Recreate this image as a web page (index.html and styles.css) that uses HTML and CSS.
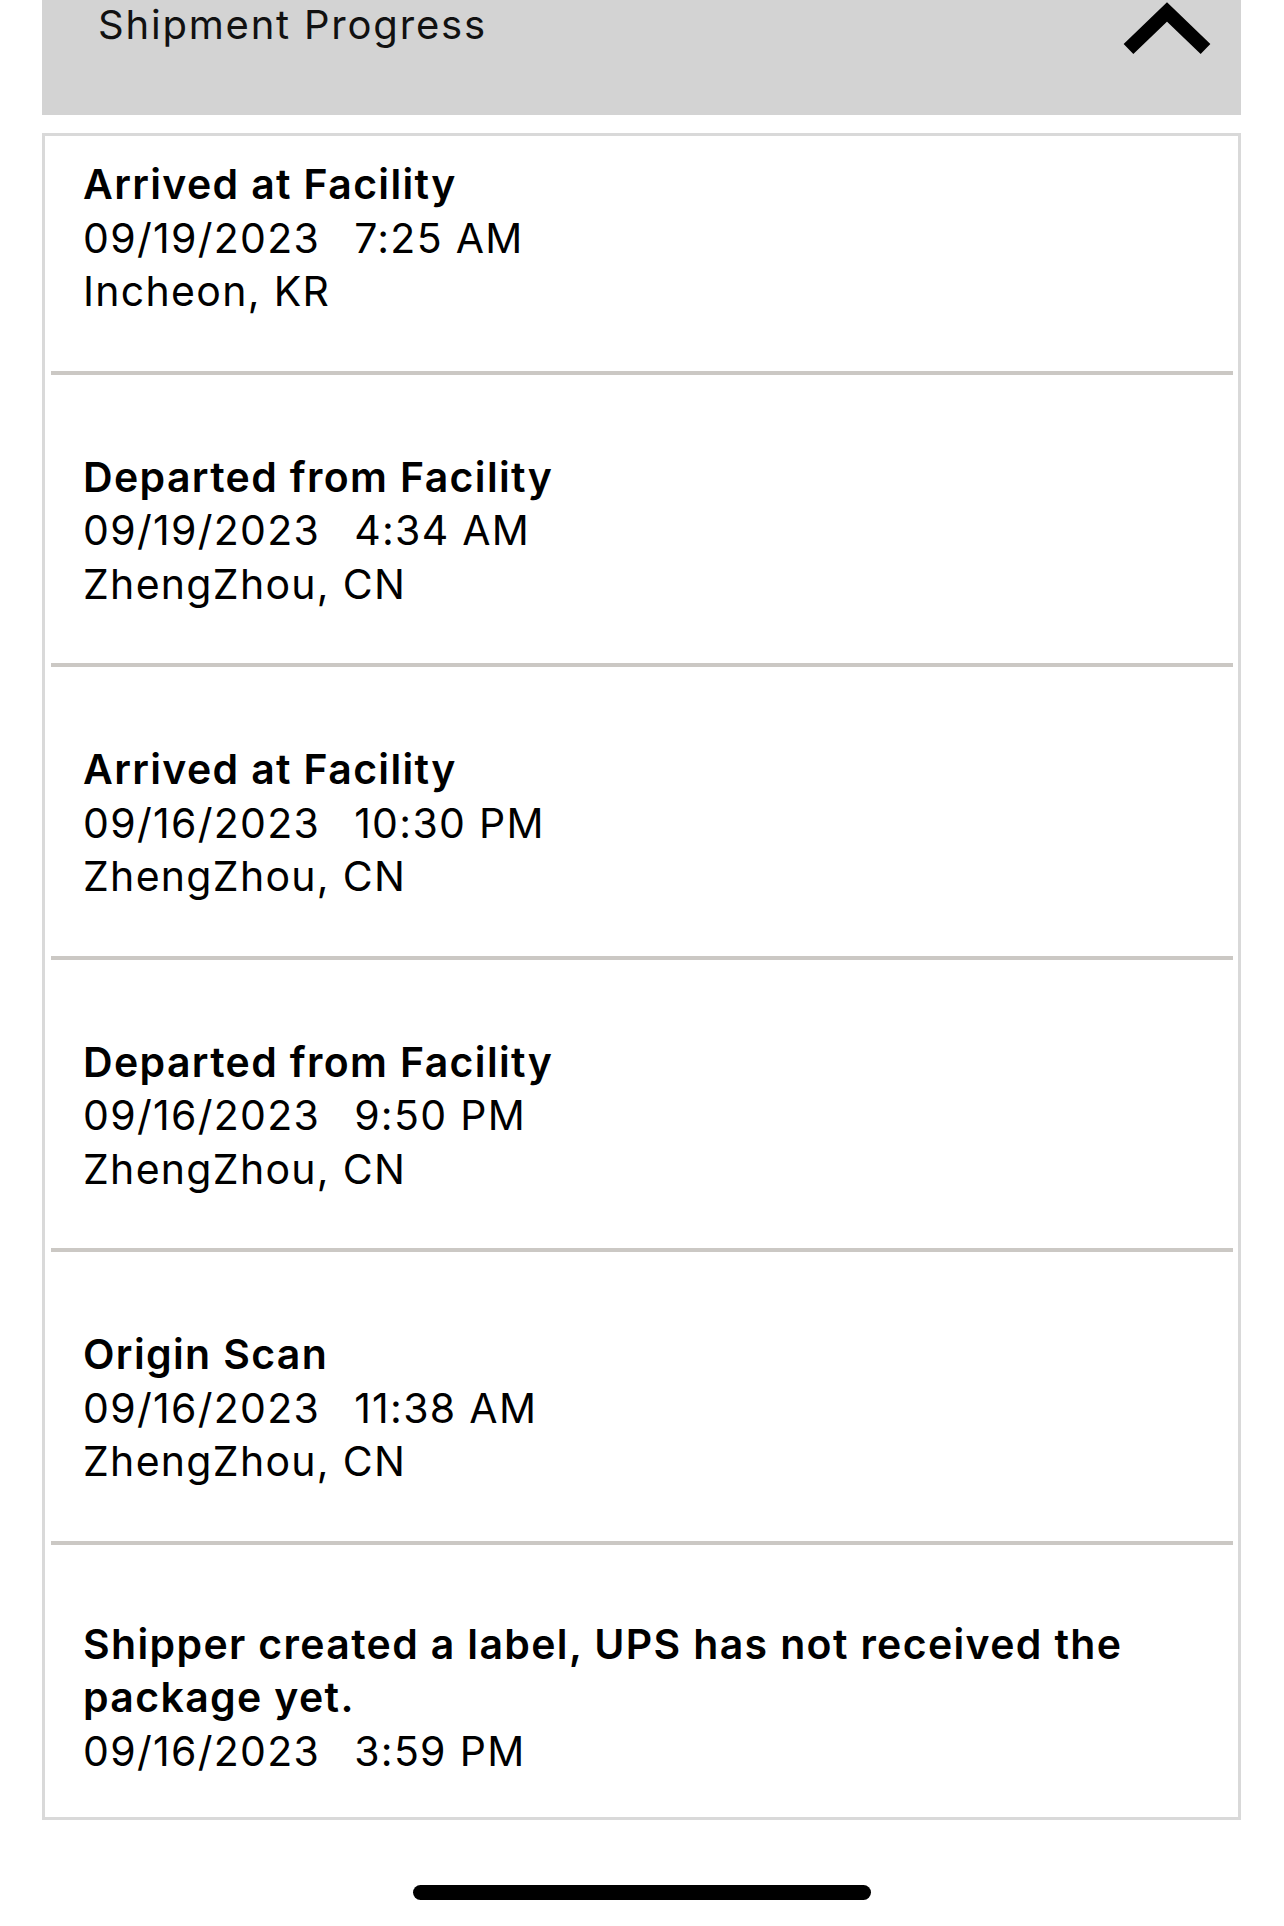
FILE: index.html
```html
<!DOCTYPE html>
<html lang="en">
<head>
<meta charset="utf-8">
<title>Shipment Progress</title>
<link rel="stylesheet" href="styles.css">
</head>
<body>
<div class="page">
  <div class="header">
    <div class="header-title">Shipment Progress</div>
    <svg class="chevron" width="90" height="56" viewBox="0 0 90 56" aria-hidden="true">
      <polyline points="6.5,49 45,12 83.5,49" fill="none" stroke="#000" stroke-width="14" stroke-linejoin="miter" stroke-linecap="butt"/>
    </svg>
  </div>
  <div class="card">
    <div class="event">
      <div class="status">Arrived at Facility</div>
      <div class="when"><span>09/19/2023</span><span class="time">7:25 AM</span></div>
      <div class="place">Incheon, KR</div>
    </div>
    <div class="event">
      <div class="status">Departed from Facility</div>
      <div class="when"><span>09/19/2023</span><span class="time">4:34 AM</span></div>
      <div class="place">ZhengZhou, CN</div>
    </div>
    <div class="event">
      <div class="status">Arrived at Facility</div>
      <div class="when"><span>09/16/2023</span><span class="time">10:30 PM</span></div>
      <div class="place">ZhengZhou, CN</div>
    </div>
    <div class="event">
      <div class="status">Departed from Facility</div>
      <div class="when"><span>09/16/2023</span><span class="time">9:50 PM</span></div>
      <div class="place">ZhengZhou, CN</div>
    </div>
    <div class="event">
      <div class="status">Origin Scan</div>
      <div class="when"><span>09/16/2023</span><span class="time">11:38 AM</span></div>
      <div class="place">ZhengZhou, CN</div>
    </div>
    <div class="event">
      <div class="status">Shipper created a label, UPS has not received the package yet.</div>
      <div class="when"><span>09/16/2023</span><span class="time">3:59 PM</span></div>
    </div>
  </div>
  <div class="home-indicator"></div>
</div>
</body>
</html>
```
FILE: styles.css
```css
html, body {
  margin: 0;
  padding: 0;
  background: #ffffff;
}

body {
  font-family: Inter, "Noto Sans", "Liberation Sans", sans-serif;
  color: #000;
}

.page {
  width: 1284px;
  min-height: 1926px;
  display: flex;
  flex-direction: column;
}

.header {
  margin: 0 43px 0 42px;
  height: 115px;
  background: #d3d3d3;
  display: flex;
  justify-content: space-between;
  align-items: flex-start;
  padding: 0 29px 0 56px;
  box-sizing: border-box;
}

.header-title {
  font-size: 40px;
  line-height: 48px;
  letter-spacing: 1.8px;
  padding-top: 1px;
  color: #111;
}

.chevron {
  display: block;
}

.card {
  margin: 18px 43px 0 42px;
  border: 3px solid #d9d9d9;
  background: #fff;
}

.event {
  margin: 0 5px 0 6px;
  padding: 76px 20px 52px 32px;
  border-bottom: 4px solid #cbc8c4;
  font-size: 41px;
  line-height: 53.5px;
  letter-spacing: 1.3px;
}

.event:first-child {
  padding-top: 22px;
}

.event:last-child {
  border-bottom: none;
  padding-top: 73px;
  padding-bottom: 39px;
}

.status {
  font-weight: 600;
  letter-spacing: 1.35px;
}

.when .time {
  margin-left: 34px;
}

.home-indicator {
  width: 458px;
  height: 15px;
  border-radius: 8px;
  background: #000;
  margin: 65px auto 0;
}
```
